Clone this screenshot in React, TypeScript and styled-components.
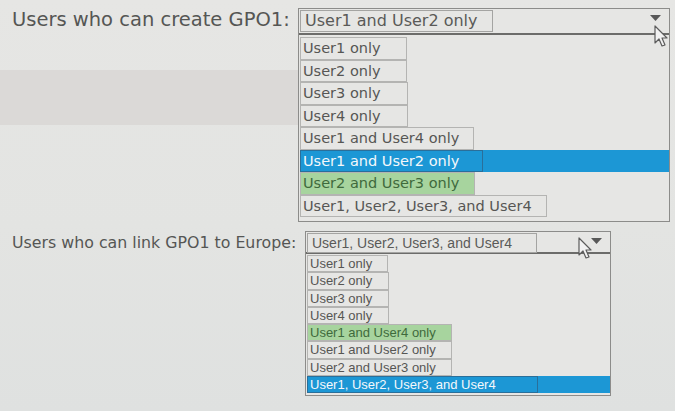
import styled, { createGlobalStyle } from 'styled-components';

const GlobalStyle = createGlobalStyle`
	html, body {
		margin: 0;
		padding: 0;
		width: 675px;
		height: 411px;
		overflow: hidden;
		background: #e2e3e1;
	}
`;

const Page = styled.div`
	display: flex;
	flex-direction: column;
	width: 675px;
	height: 411px;
	background: linear-gradient(180deg, #e6e6e4 0%, #e3e4e2 55%, #dfe1e0 100%);
`;

const Row = styled.div<{ $top: number }>`
	display: flex;
	align-items: flex-start;
	padding: ${(p) => p.$top}px 0 0 12px;
`;

const Side = styled.div<{ $w: number }>`
	display: flex;
	flex-direction: column;
	width: ${(p) => p.$w}px;
	flex-shrink: 0;
`;

const Label = styled.div<{ $size: number; $top: number }>`
	margin-top: ${(p) => p.$top}px;
	font-family: 'DejaVu Sans', Verdana, sans-serif;
	font-size: ${(p) => p.$size}px;
	line-height: 1.15;
	color: #555654;
	white-space: nowrap;
`;

const Shade = styled.div`
	margin: 39px 0 0 -12px;
	height: 55px;
	background: #dbd9d7;
`;

const Select = styled.div<{ $w: number }>`
	position: relative;
	width: ${(p) => p.$w}px;
	border: 1px solid #8c8c8a;
	background: #e6e6e4;
`;

const Head = styled.div<{ $h: number }>`
	display: flex;
	align-items: flex-start;
	justify-content: space-between;
	height: ${(p) => p.$h}px;
	padding: 1px 0 0 1px;
	box-sizing: border-box;
	border-bottom: 2px solid #6c6c6a;
`;

const Value = styled.div<{ $w: number; $font: string; $size: number }>`
	width: ${(p) => p.$w}px;
	box-sizing: border-box;
	padding-left: 4px;
	border: 1px solid #a4a4a2;
	font-family: ${(p) => p.$font};
	font-size: ${(p) => p.$size}px;
	line-height: ${(p) => p.$size + 4}px;
	color: #5a5a58;
	white-space: nowrap;
`;

const Arrow = styled.svg`
	margin: 5px 8px 0 0;
	flex-shrink: 0;
`;

const List = styled.div<{ $pad: string }>`
	display: flex;
	flex-direction: column;
	padding: ${(p) => p.$pad};
`;

const Item = styled.div<{
	$w: number;
	$h: number;
	$font: string;
	$size: number;
	$kind?: 'blue' | 'green';
}>`
	display: flex;
	height: ${(p) => p.$h}px;
	background: ${(p) => (p.$kind === 'blue' ? '#1c97d5' : 'transparent')};

	span {
		display: block;
		width: ${(p) => p.$w}px;
		box-sizing: border-box;
		padding-left: 2px;
		border: 1px solid ${(p) => (p.$kind === 'blue' ? '#2a6f9a' : '#b4b4b2')};
		background: ${(p) => (p.$kind === 'green' ? '#a7d49e' : 'transparent')};
		font-family: ${(p) => p.$font};
		font-size: ${(p) => p.$size}px;
		line-height: ${(p) => p.$h - 2}px;
		color: ${(p) =>
			p.$kind === 'blue' ? '#f4f8fb' : p.$kind === 'green' ? '#3f6a3c' : '#565654'};
		white-space: nowrap;
	}
`;

const Pointer = styled.svg<{ $x: number; $y: number }>`
	position: absolute;
	left: ${(p) => p.$x}px;
	top: ${(p) => p.$y}px;
	pointer-events: none;
`;

const SANS = "'DejaVu Sans', Verdana, sans-serif";
const ARIAL = "'Liberation Sans', Arial, sans-serif";

type Opt = { text: string; w: number; kind?: 'blue' | 'green' };

const first: Opt[] = [
	{ text: 'User1 only', w: 107 },
	{ text: 'User2 only', w: 107 },
	{ text: 'User3 only', w: 108 },
	{ text: 'User4 only', w: 108 },
	{ text: 'User1 and User4 only', w: 174 },
	{ text: 'User1 and User2 only', w: 183, kind: 'blue' },
	{ text: 'User2 and User3 only', w: 175, kind: 'green' },
	{ text: 'User1, User2, User3, and User4', w: 247 },
];

const second: Opt[] = [
	{ text: 'User1 only', w: 81 },
	{ text: 'User2 only', w: 82 },
	{ text: 'User3 only', w: 82 },
	{ text: 'User4 only', w: 82 },
	{ text: 'User1 and User4 only', w: 145, kind: 'green' },
	{ text: 'User1 and User2 only', w: 145 },
	{ text: 'User2 and User3 only', w: 145 },
	{ text: 'User1, User2, User3, and User4', w: 231, kind: 'blue' },
];

const Cursor = ({ x, y }: { x: number; y: number }) => (
	<Pointer $x={x} $y={y} width="16" height="24" viewBox="0 0 16 24">
		<path
			d="M1 1 L1 18 L5 14 L8 21 L11 20 L8 13 L13 13 Z"
			fill="#f2f2f2"
			stroke="#5c5c5c"
			strokeWidth="1.2"
			strokeLinejoin="round"
		/>
	</Pointer>
);

const DownArrow = () => (
	<Arrow width="11" height="7" viewBox="0 0 11 7">
		<path d="M0 0 L11 0 L5.5 6 Z" fill="#585858" />
	</Arrow>
);

export default function App() {
	return (
		<Page>
			<GlobalStyle />
			<Row $top={8}>
				<Side $w={286}>
					<Label $size={19.5} $top={1}>
						Users who can create GPO1:
					</Label>
					<Shade />
				</Side>
				<Select $w={370}>
					<Head $h={26}>
						<Value $w={193} $font={SANS} $size={16}>
							User1 and User2 only
						</Value>
						<DownArrow />
					</Head>
					<List $pad="2px 0 4px 1px">
						{first.map((o) => (
							<Item key={o.text} $w={o.w} $h={22.5} $font={SANS} $size={14.5} $kind={o.kind}>
								<span>{o.text}</span>
							</Item>
						))}
					</List>
					<Cursor x={355} y={16} />
				</Select>
			</Row>
			<Row $top={9}>
				<Side $w={293}>
					<Label $size={15.8} $top={3}>
						Users who can link GPO1 to Europe:
					</Label>
				</Side>
				<Select $w={304}>
					<Head $h={22}>
						<Value $w={230} $font={ARIAL} $size={14}>
							User1, User2, User3, and User4
						</Value>
						<DownArrow />
					</Head>
					<List $pad="1px 0 2px 1px">
						{second.map((o) => (
							<Item key={o.text} $w={o.w} $h={17.3} $font={ARIAL} $size={13} $kind={o.kind}>
								<span>{o.text}</span>
							</Item>
						))}
					</List>
					<Cursor x={272} y={5} />
				</Select>
			</Row>
		</Page>
	);
}
